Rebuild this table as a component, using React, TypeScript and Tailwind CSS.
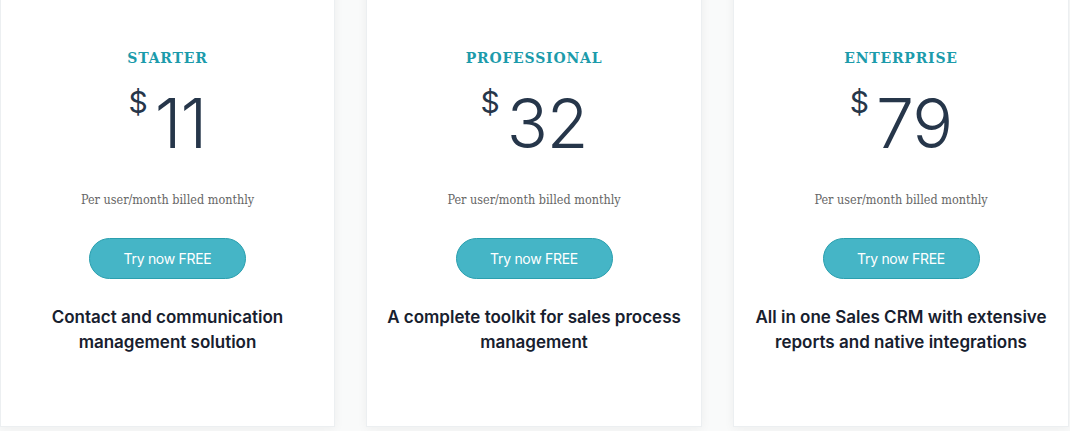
const plans = [
  {
    name: 'STARTER',
    price: '11',
    text: ['Contact and communication', 'management solution'],
  },
  {
    name: 'PROFESSIONAL',
    price: '32',
    text: ['A complete toolkit for sales process', 'management'],
  },
  {
    name: 'ENTERPRISE',
    price: '79',
    text: ['All in one Sales CRM with extensive', 'reports and native integrations'],
  },
];

function PlanCard({ plan }: { plan: (typeof plans)[number] }) {
  return (
    <div className="bg-white border border-[#eceff1] shadow-[0_2px_10px_rgba(0,0,0,0.05)] flex flex-col items-center pt-[67px] h-[444px]">
      {/* Nom du plan */}
      <h3 className="font-['DejaVu_Serif',serif] font-bold text-[14px] tracking-[0.8px] text-[#1c9bab] leading-none">
        {plan.name}
      </h3>

      {/* Prix */}
      <div className="flex items-start mt-[24px] text-[#26364a] font-['Inter',sans-serif]">
        <span className="text-[30px] font-normal leading-none -mt-[2px] mr-[7px]">$</span>
        <span className="text-[68px] font-light leading-none tracking-[-1px]">{plan.price}</span>
      </div>

      <p className="mt-[37px] font-['DejaVu_Serif_Condensed','DejaVu_Serif',serif] font-light text-[12.5px] text-[#666] leading-none">
        Per user/month billed monthly
      </p>

      <button className="mt-[31px] w-[157px] h-[41px] rounded-full bg-[#45b5c6] border border-[#2a9fae] text-white text-[14px] font-['Inter',sans-serif] tracking-[-0.3px]">
        Try now FREE
      </button>

      <p className="mt-[26px] text-center font-['Inter',sans-serif] font-semibold text-[17px] leading-[25px] text-[#17202e]">
        {plan.text[0]}
        <br />
        {plan.text[1]}
      </p>
    </div>
  );
}

export default function App() {
  return (
    <main className="w-[1070px] h-[431px] overflow-hidden bg-[#f9fafa]">
      <div className="-mt-[17px] grid grid-cols-[335px_336px_336px] gap-[31px]">
        {plans.map((plan) => (
          <PlanCard key={plan.name} plan={plan} />
        ))}
      </div>
    </main>
  );
}
